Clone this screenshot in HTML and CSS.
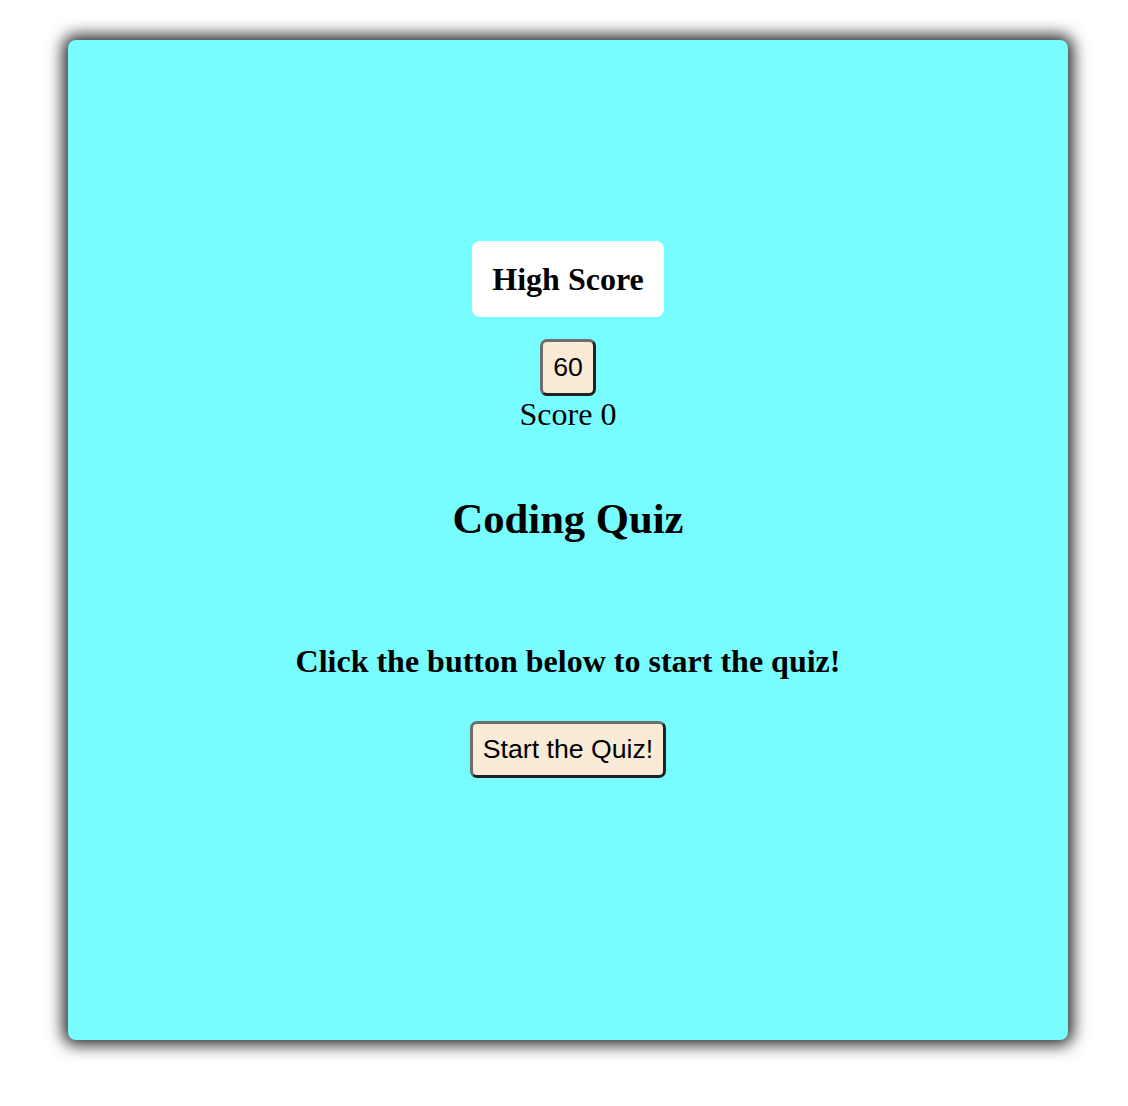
FILE: index.html
```html
<!DOCTYPE html>
<html lang="en">
<head>
<meta charset="utf-8">
<title>Coding Quiz</title>
<link rel="stylesheet" href="styles.css">
</head>
<body>
<main class="card">
  <div class="high-score">High Score</div>
  <button class="btn timer">60</button>
  <div class="score">Score 0</div>
  <h1 class="title">Coding Quiz</h1>
  <h2 class="prompt">Click the button below to start the quiz!</h2>
  <button class="btn start">Start the Quiz!</button>
</main>
</body>
</html>
```

FILE: styles.css
```css
html, body {
  margin: 0;
  padding: 0;
  background: #ffffff;
}
body {
  font-family: "Liberation Serif", "Times New Roman", serif;
  color: #000;
  padding: 40px 0 60px 68px;
  min-height: 1106px;
  box-sizing: border-box;
}
.card {
  box-sizing: border-box;
  width: 1000px;
  height: 1000px;
  padding-top: 201px;
  background: #77fcff;
  border-radius: 8px;
  box-shadow: 0 0 16px 5px rgba(0, 0, 0, 0.85);
  display: flex;
  flex-direction: column;
  align-items: center;
}
.high-score {
  background: #ffffff;
  border-radius: 8px;
  padding: 20px;
  font-size: 32px;
  font-weight: bold;
  line-height: 36px;
  margin-bottom: 22px;
}
.btn {
  font-family: "Liberation Sans", Arial, sans-serif;
  font-size: 26.67px;
  line-height: 31px;
  padding: 10px;
  background: #faebd7;
  color: #000;
  border-style: solid;
  border-width: 3px;
  border-color: #6e6e6e #222222 #222222 #6e6e6e;
  border-radius: 7px;
  margin: 0;
}
.score {
  font-size: 32px;
  line-height: 37px;
}
.title {
  font-size: 42.67px;
  line-height: 49px;
  font-weight: bold;
  margin: 61px 0 0 0;
}
.prompt {
  font-size: 32px;
  line-height: 37px;
  font-weight: bold;
  margin: 100px 0 41px 0;
}
```
